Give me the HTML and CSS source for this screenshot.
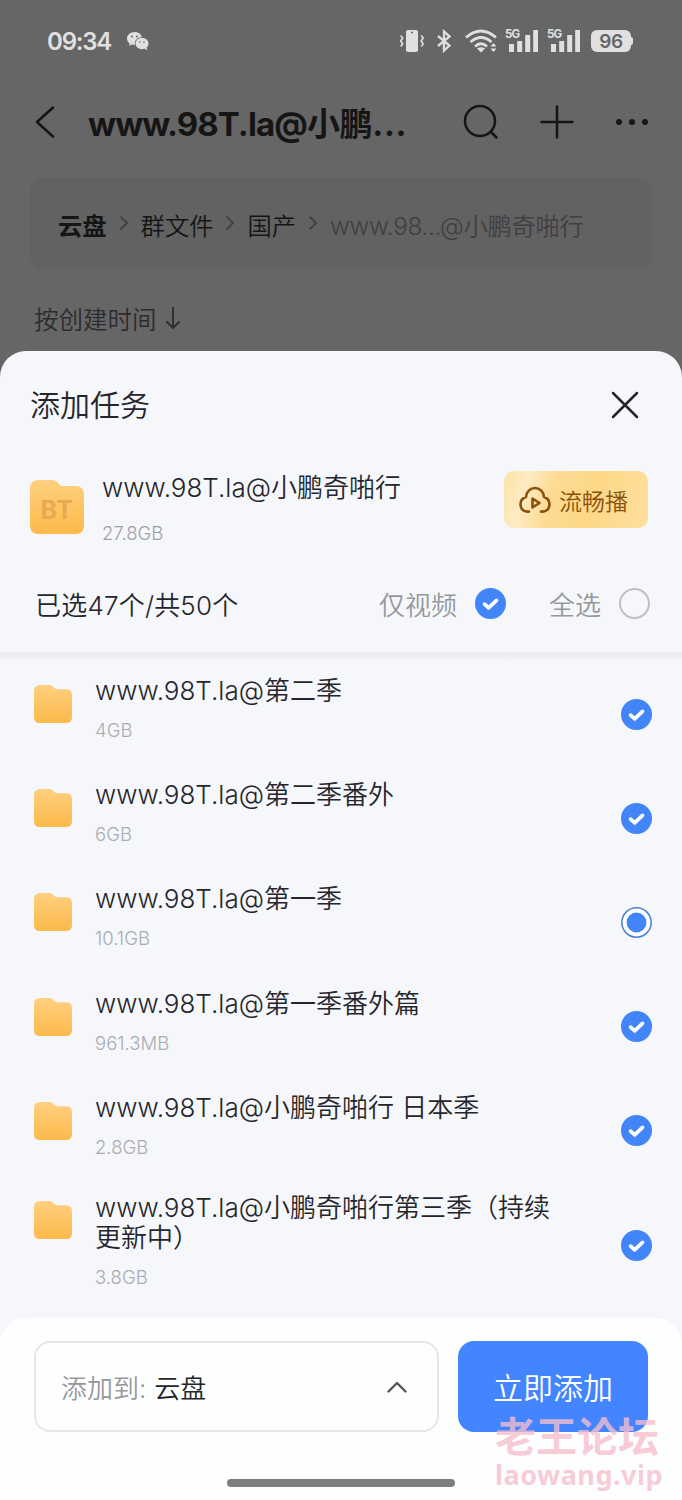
FILE: index.html
```html
<!DOCTYPE html>
<html lang="zh-CN">
<head>
  <meta charset="UTF-8" />
  <meta name="viewport" content="width=device-width, initial-scale=1.0"/>
  <title>添加任务</title>
  <link rel="stylesheet" href="styles.css">
</head>
<body>
  <!-- 图标 -->
  <svg class="icon-defs" width="0" height="0">
    <defs>
      <linearGradient id="folderFill" x1="0" y1="0" x2="0" y2="1">
        <stop offset="0" stop-color="#fed07f"/>
        <stop offset="1" stop-color="#fdb94b"/>
      </linearGradient>
      <symbol id="folder" viewBox="0 0 38 38">
        <path fill="url(#folderFill)" d="M6 0H15.5C17.3 0 18.3.7 19.4 1.9L20.5 3C21.5 4 22.3 4.3 23.8 4.3H32Q38 4.3 38 10.3V32Q38 38 32 38H6Q0 38 0 32V6Q0 0 6 0Z"/>
      </symbol>
      <symbol id="check" viewBox="0 0 30 30">
        <circle cx="15" cy="15" r="15" fill="#4285f8"/>
        <path d="M9.3 15.6L13.2 19.2L20.8 12" fill="none" stroke="#fff" stroke-width="3.6" stroke-linecap="round" stroke-linejoin="round"/>
      </symbol>
      <symbol id="half" viewBox="0 0 30 30">
        <circle cx="15" cy="15" r="14.2" fill="#fff" stroke="#4a82dc" stroke-width="1.5"/>
        <circle cx="15" cy="15" r="9.6" fill="#4285f8"/>
      </symbol>
      <symbol id="signal" viewBox="0 0 30 24">
        <path d="M1 15h5v8H1zM9.200 12h5v11h-5zM17.200 6h5v17h-5zM25.200 1h5v22h-5z" fill="#e0e0e0"/>
      </symbol>
      <symbol id="arrow" viewBox="0 0 10 16">
        <path d="M1.500 1.500L8 8L1.500 14.500" fill="none" stroke="#3c3c3c" stroke-width="1.700"/>
      </symbol>
    </defs>
  </svg>

  <!-- 背景页面 -->
  <div class="page">
    <div class="status-bar">
      <span class="time">09:34</span>
      <svg class="wechat" width="22" height="19" viewBox="0 0 22 19">
        <path fill="#e0e0e0" d="M7.600 0C3.400 0 0 2.900 0 6.600C0 8.600 1 10.400 2.700 11.600L2 14L4.800 12.600C5.800 12.900 6.900 13 8 13C7 8.500 10.500 5 15 4.900C14 2 11.200 0 7.600 0Z"/>
        <ellipse cx="15" cy="11.500" rx="6.500" ry="5.700" fill="#e0e0e0"/>
        <path d="M17 16L20 18.400L19.500 15Z" fill="#e0e0e0"/>
        <g fill="#666"><circle cx="5" cy="4.500" r="1"/><circle cx="10" cy="4.500" r="1"/><circle cx="12.800" cy="10" r=".8"/><circle cx="17" cy="10" r=".8"/></g>
      </svg>
      <div class="status-icons">
        <svg class="vibrate" width="24" height="24" viewBox="0 0 24 24">
          <rect x="6" y="1" width="12" height="22" rx="2" fill="#e0e0e0"/>
          <path d="M11 3.500h2" stroke="#666" stroke-width="1.500"/>
          <path d="M1 6.500L3 9L1 12L3 15L1 17.500M21.500 6.500L23.500 9L21.500 12L23.500 15L21.500 17.500" transform="translate(-.3 0)" fill="none" stroke="#e0e0e0" stroke-width="1.600"/>
        </svg>
        <svg class="bluetooth" width="16" height="24" viewBox="0 0 16 24">
          <path d="M2 7L13.500 16.500L8 21.500V2.500L13.500 7.500L2 17" fill="none" stroke="#e0e0e0" stroke-width="2.300"/>
        </svg>
        <svg class="wifi" width="33" height="24" viewBox="0 0 33 24">
          <g fill="none" stroke="#e0e0e0" stroke-width="2.700">
            <path d="M1 8.500Q16 -4.500 31 8.500"/><path d="M5.500 13Q16 4 26.500 13"/><path d="M10 17.500Q16 12 22 17.500"/>
          </g>
          <path d="M12 19.500Q16 17 20 19.500L16 23.500ZM25.500 17.500L28.500 14L31.500 17.500ZM25.500 19.500H31.500L28.500 23Z" fill="#e0e0e0"/>
        </svg>
        <div class="signal"><span>5G</span><svg width="31" height="24"><use href="#signal" width="30" height="24"/></svg></div>
        <div class="signal"><span>5G</span><svg width="31" height="24"><use href="#signal" width="30" height="24"/></svg></div>
        <div class="battery">96</div>
      </div>
    </div>

    <div class="nav">
      <svg class="back" width="20" height="32" viewBox="0 0 20 32"><path d="M18 1.500L2 16L18 30.500" fill="none" stroke="#151515" stroke-width="2.500" stroke-linecap="round" stroke-linejoin="round"/></svg>
      <h1><span class="nav-latin">www.98T.la@</span>小鹏<span class="nav-dots">...</span></h1>
      <div class="nav-icons">
        <svg width="36" height="36" viewBox="0 0 36 36"><g fill="none" stroke="#151515" stroke-width="2.500" stroke-linecap="round"><circle cx="17" cy="17" r="15"/><path d="M28 28L33.500 33.500"/></g></svg>
        <svg width="34" height="34" viewBox="0 0 34 34"><path d="M17 1.500V32.500M1.500 17H32.500" fill="none" stroke="#151515" stroke-width="2.500" stroke-linecap="round"/></svg>
        <svg width="34" height="34" viewBox="0 0 34 34"><g fill="#151515"><circle cx="4" cy="17" r="3"/><circle cx="17" cy="17" r="3"/><circle cx="30" cy="17" r="3"/></g></svg>
      </div>
    </div>

    <div class="breadcrumb">
      <b>云盘</b>
      <svg width="10" height="16"><use href="#arrow"/></svg>
      <span>群文件</span>
      <svg width="10" height="16"><use href="#arrow"/></svg>
      <span>国产</span>
      <svg width="10" height="16"><use href="#arrow"/></svg>
      <span class="current">www.98...@小鹏奇啪行</span>
    </div>

    <div class="sort">
      <span>按创建时间</span>
      <svg width="16" height="24" viewBox="0 0 16 24"><path d="M8 1V22M1.500 15.500L8 22L14.500 15.500" fill="none" stroke="#2c2c2c" stroke-width="1.800"/></svg>
    </div>
  </div>

  <!-- 添加任务弹层 -->
  <div class="sheet">
    <div class="sheet-header">
      <h2>添加任务</h2>
      <svg width="28" height="28" viewBox="0 0 28 28"><path d="M2 2L26 26M26 2L2 26" stroke="#25262b" stroke-width="2.500" stroke-linecap="round"/></svg>
    </div>

    <div class="task">
      <div class="task-icon">
        <svg width="54" height="54"><use href="#folder"/></svg>
        <span>BT</span>
      </div>
      <div class="task-info">
        <p class="name">www.98T.la@小鹏奇啪行</p>
        <p class="size">27.8GB</p>
      </div>
      <button class="play-btn">
        <svg width="32" height="28" viewBox="0 0 32 28">
          <g fill="none" stroke="#8b5009" stroke-width="2.600" stroke-linecap="round" stroke-linejoin="round">
            <path d="M10 25.500C4.500 26.500 1.500 22.500 1.500 18.500C1.500 15 3.500 12 7 11C7.500 5.500 11.500 2 16 2C20.500 2 24.500 5.500 25 11C28.500 12 30.500 15 30.500 18.500C30.500 22.500 27.500 26.500 22 25.500"/>
            <path d="M13.500 12.500V21.500L20.500 17Z"/>
          </g>
        </svg>
        流畅播
      </button>
    </div>

    <div class="select-bar">
      <span class="count">已选47个/共50个</span>
      <span class="option">仅视频</span>
      <svg class="mark" width="31" height="31"><use href="#check"/></svg>
      <span class="option all">全选</span>
      <span class="circle"></span>
    </div>

    <div class="list">
      <div class="item">
        <svg class="folder" width="38" height="38"><use href="#folder"/></svg>
        <div class="info">
          <p class="name">www.98T.la@第二季</p>
          <p class="size">4GB</p>
        </div>
        <svg class="mark" width="31" height="31"><use href="#check"/></svg>
      </div>
      <div class="item">
        <svg class="folder" width="38" height="38"><use href="#folder"/></svg>
        <div class="info">
          <p class="name">www.98T.la@第二季番外</p>
          <p class="size">6GB</p>
        </div>
        <svg class="mark" width="31" height="31"><use href="#check"/></svg>
      </div>
      <div class="item">
        <svg class="folder" width="38" height="38"><use href="#folder"/></svg>
        <div class="info">
          <p class="name">www.98T.la@第一季</p>
          <p class="size">10.1GB</p>
        </div>
        <svg class="mark" width="31" height="31"><use href="#half"/></svg>
      </div>
      <div class="item">
        <svg class="folder" width="38" height="38"><use href="#folder"/></svg>
        <div class="info">
          <p class="name">www.98T.la@第一季番外篇</p>
          <p class="size">961.3MB</p>
        </div>
        <svg class="mark" width="31" height="31"><use href="#check"/></svg>
      </div>
      <div class="item">
        <svg class="folder" width="38" height="38"><use href="#folder"/></svg>
        <div class="info">
          <p class="name">www.98T.la@小鹏奇啪行 日本季</p>
          <p class="size">2.8GB</p>
        </div>
        <svg class="mark" width="31" height="31"><use href="#check"/></svg>
      </div>
      <div class="item two-lines">
        <svg class="folder" width="38" height="38"><use href="#folder"/></svg>
        <div class="info">
          <p class="name">www.98T.la@小鹏奇啪行第三季（持续<br>更新中）</p>
          <p class="size">3.8GB</p>
        </div>
        <svg class="mark" width="31" height="31"><use href="#check"/></svg>
      </div>
    </div>

    <div class="footer">
      <div class="actions">
        <div class="target">
          <span class="label">添加到:</span>
          <span>云盘</span>
          <svg width="20" height="12" viewBox="0 0 20 12"><path d="M1.500 10.500L10 2L18.500 10.500" fill="none" stroke="#555" stroke-width="2.400" stroke-linecap="round" stroke-linejoin="round"/></svg>
        </div>
        <button class="add-btn">立即添加</button>
      </div>
      <div class="home-bar"></div>
    </div>
  </div>

  <!-- 水印 -->
  <div class="watermark">
    <div class="wm-title">老王论坛</div>
    <div class="wm-url">laowang.vip</div>
  </div>
</body>
</html>
```
FILE: styles.css
```css
* { box-sizing: border-box; margin: 0; padding: 0; }
body {
  width: 682px;
  height: 1500px;
  overflow: hidden;
  position: relative;
  background: #666;
  font-family: Inter, "Noto Sans CJK SC", sans-serif;
  font-weight: 350;
  color: #25262b;
}
svg { display: block; flex-shrink: 0; }
button { border: none; font-family: inherit; font-weight: inherit; }
.icon-defs { position: absolute; }

/* 背景页面 */
.page { height: 351px; }
.status-bar {
  display: flex;
  align-items: center;
  height: 82px;
  padding: 0 49px 0 47px;
  color: #e0e0e0;
}
.time {
  width: 80px;
  font-size: 24px;
  font-weight: 600;
  letter-spacing: -1.2px;
}
.status-icons {
  display: flex;
  align-items: center;
  margin-left: auto;
}
.bluetooth { margin-left: 12px; }
.wifi { margin-left: 13px; }
.signal {
  position: relative;
  margin-left: 10px;
}
.signal + .signal { margin-left: 11px; }
.signal span {
  position: absolute;
  left: -3px;
  top: -1px;
  font-size: 11.5px;
  font-weight: 700;
  line-height: 13px;
  letter-spacing: -0.8px;
}
.battery {
  position: relative;
  width: 40px;
  height: 22px;
  margin-left: 10px;
  margin-right: 2px;
  border-radius: 6px;
  background: #e0e0e0;
  color: #666;
  font-size: 19px;
  font-weight: 600;
  line-height: 23px;
  letter-spacing: -0.5px;
  text-align: center;
}
.battery::after {
  content: "";
  position: absolute;
  right: -2px;
  top: 7px;
  width: 2px;
  height: 8px;
  border-radius: 0 2px 2px 0;
  background: #e0e0e0;
}
.nav {
  display: flex;
  align-items: center;
  height: 80px;
  padding: 0 33px 0 35px;
  color: #151515;
}
.nav h1 {
  margin-left: 33px;
  font-size: 33px;
  font-weight: 700;
  letter-spacing: -0.3px;
  white-space: nowrap;
}
.nav-latin { letter-spacing: -0.9px; }
.nav-dots { letter-spacing: 0.6px; }
.nav-icons {
  display: flex;
  align-items: center;
  gap: 41px;
  margin-left: auto;
}
.breadcrumb {
  display: flex;
  align-items: center;
  height: 91px;
  margin: 16px 30px 0;
  padding: 2px 28px 0;
  border-radius: 14px;
  background: #626262;
  font-size: 24.3px;
  color: #151515;
  white-space: nowrap;
}
.breadcrumb svg { margin: -4px 12px 0; }
.breadcrumb b { font-weight: 700; }
.breadcrumb .current { color: #3f3f3f; letter-spacing: -0.3px; }
.sort {
  display: flex;
  align-items: center;
  gap: 8px;
  margin-top: 28px;
  padding-left: 34px;
  height: 42px;
  font-size: 24.5px;
  color: #2c2c2c;
}

/* 弹层 */
.sheet {
  display: flex;
  flex-direction: column;
  height: 1149px;
  border-radius: 26px 26px 0 0;
  background: #f5f7fb;
}
.sheet-header {
  display: flex;
  align-items: center;
  justify-content: space-between;
  height: 107px;
  padding: 0 43px 0 30px;
}
.sheet-header h2 {
  padding-bottom: 3px;
  font-size: 30px;
  font-weight: 350;
}
.task {
  display: flex;
  height: 100px;
  padding: 13px 34px 0 30px;
}
.task-icon {
  position: relative;
  margin-top: 9px;
}
.task-icon span {
  position: absolute;
  left: 0;
  top: 16px;
  width: 54px;
  font-size: 25px;
  font-weight: 700;
  line-height: 28px;
  letter-spacing: 0.6px;
  text-align: center;
  color: #e9a950;
}
.task-info { margin-left: 18px; padding-top: 2px; }
.name {
  font-size: 26px;
  line-height: 30px;
  white-space: nowrap;
}
.size {
  margin-top: 12px;
  font-size: 18.5px;
  line-height: 24px;
  color: #aaacb1;
}
.task-info .size { margin-top: 18px; color: #9fa1a6; }
.play-btn {
  display: flex;
  align-items: center;
  gap: 8px;
  width: 144px;
  height: 57px;
  margin-left: auto;
  padding-left: 15px;
  border-radius: 10px;
  background: linear-gradient(105deg, #fde3a8 0%, #feebc3 16%, #fddb92 34%, #fcd887 60%, #ffdf9e 100%);
  font-size: 23px;
  color: #8b5009;
}
.select-bar {
  display: flex;
  align-items: center;
  height: 94px;
  padding: 0 32px 3px 35px;
  font-size: 26px;
}
.count { margin-right: auto; letter-spacing: 0.2px; }
.option { margin-right: 18px; color: #96989d; }
.option.all { margin-left: 43px; }
.circle {
  width: 31px;
  height: 31px;
  border: 2px solid #bfc0c3;
  border-radius: 50%;
}
.list {
  flex: 1;
  padding-top: 10px;
  background: linear-gradient(#e9ebef, #f1f3f6 7px, #f5f7fb 8px);
}
.item {
  display: flex;
  align-items: center;
  height: 104.2px;
  padding: 0 30px 0 34px;
}
.folder {
  align-self: flex-start;
  margin-top: 23px;
}
.info {
  flex: 1;
  align-self: flex-start;
  margin-left: 23px;
  padding-top: 14px;
}
.two-lines { height: 125px; }
.two-lines .folder { margin-top: 18px; }
.two-lines .info { padding-top: 10px; }

/* 底部操作 */
.footer {
  height: 182px;
  padding: 23px 34px 0;
  border-radius: 26px 26px 0 0;
  background: #fdfefe;
}
.actions { display: flex; gap: 19px; }
.target {
  display: flex;
  align-items: center;
  gap: 8px;
  width: 405px;
  height: 91px;
  padding: 0 30px 0 25px;
  border: 2px solid #e5e6e8;
  border-radius: 16px;
  font-size: 26px;
}
.target svg { margin-left: auto; }
.label { color: #96989d; }
.add-btn {
  flex: 1;
  height: 91px;
  padding-bottom: 2px;
  border-radius: 16px;
  background: #4285ff;
  font-size: 30px;
  color: #fff;
}
.home-bar {
  width: 228px;
  height: 8px;
  margin: 47px auto 0;
  border-radius: 4px;
  background: #7c7e7d;
}

/* 水印 */
.watermark {
  position: absolute;
  left: 495px;
  top: 1410px;
  color: rgba(247, 190, 205, 0.8);
  font-family: "Noto Sans CJK SC", sans-serif;
  font-weight: 700;
  white-space: nowrap;
}
.wm-title { font-size: 41px; line-height: 48px; }
.wm-url {
  font-family: "Noto Sans", sans-serif;
  font-size: 27px;
  line-height: 34px;
  letter-spacing: 0.5px;
}
```
